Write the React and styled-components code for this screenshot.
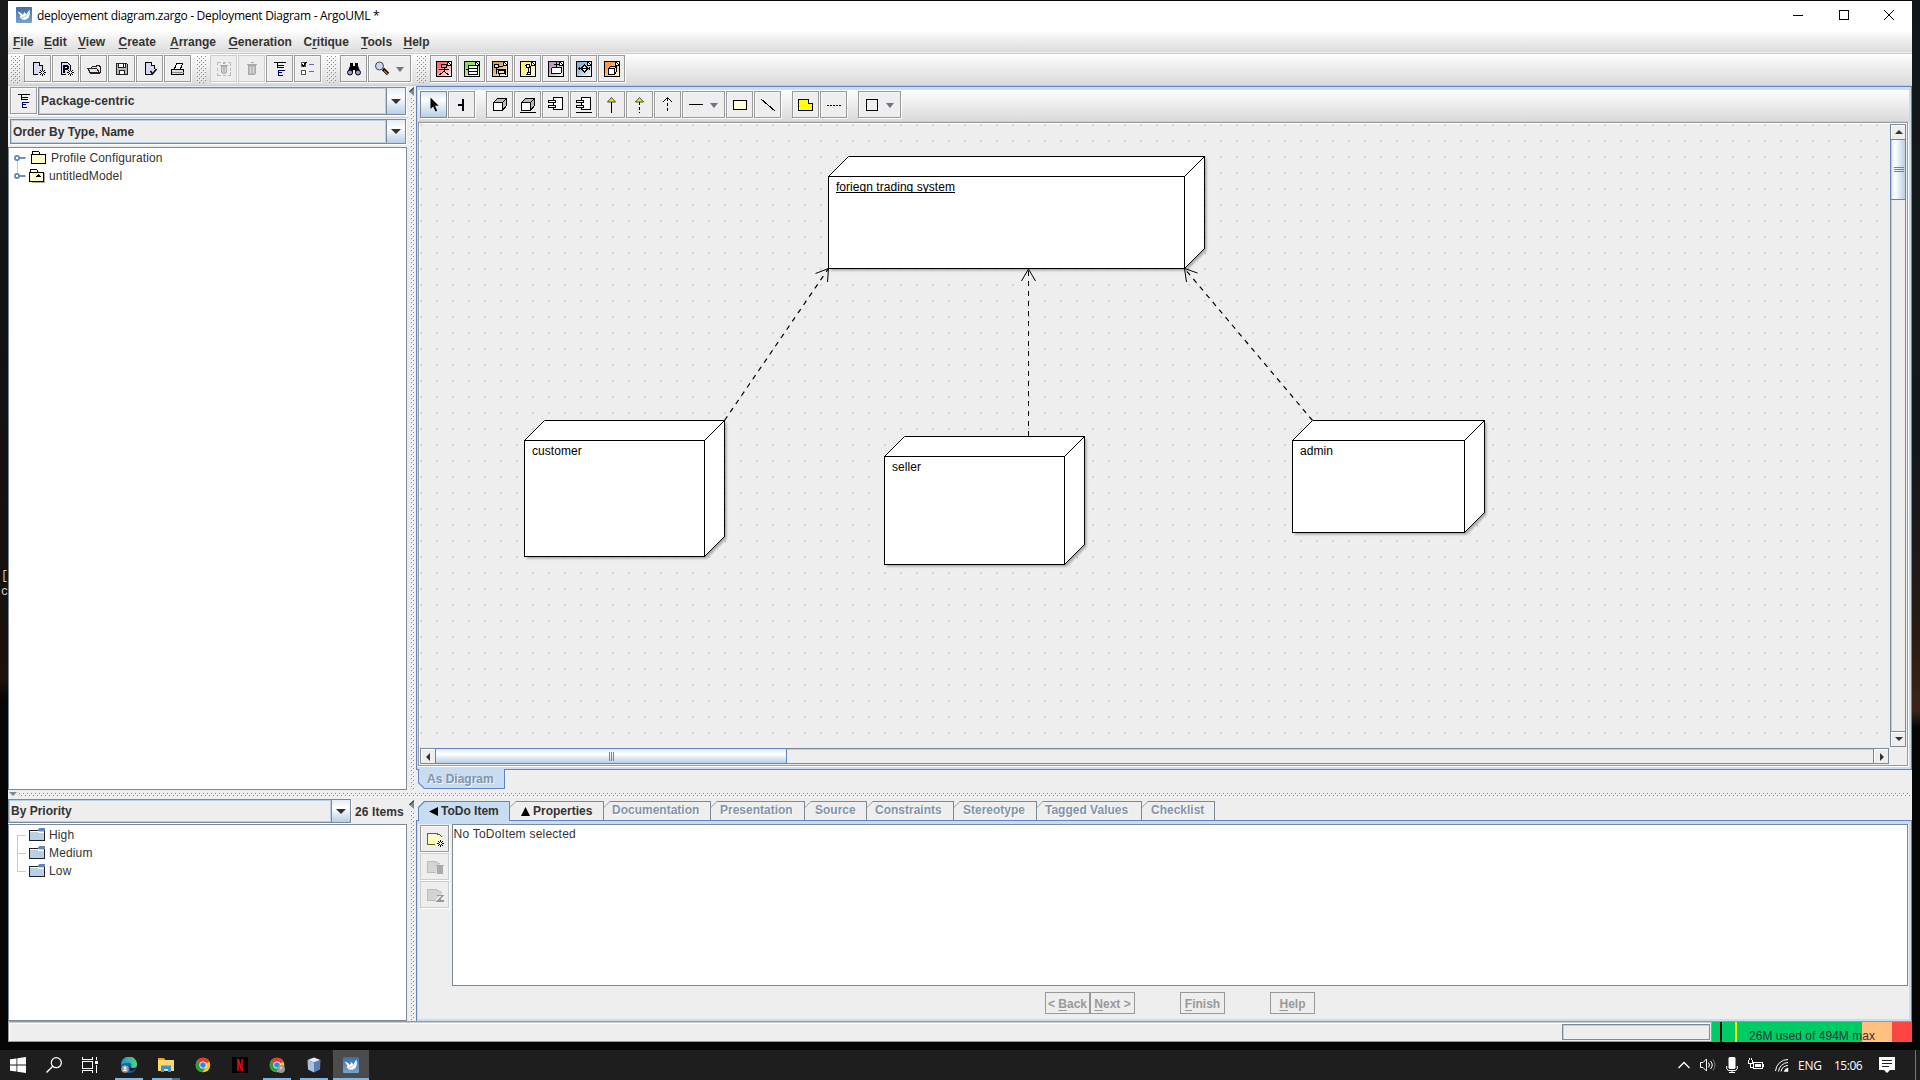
import React from 'react';
import styled, { createGlobalStyle, css } from 'styled-components';

const Global = createGlobalStyle`
  html, body { margin: 0; padding: 0; background: #050505; }
  * { box-sizing: border-box; }
  svg { display: block; flex: none; }
`;

const metal = '#7a8a99';
const blue = '#6382bf';
const sky = '#c8ddf2';
const face = '#eeeeee';

const dots = (c, x = 0, y = 0) => css`
  background-image: conic-gradient(at 1px 1px, transparent 75%, ${c} 0), conic-gradient(at 1px 1px, transparent 75%, ${c} 0),
    conic-gradient(at 1px 1px, transparent 75%, #fff 0), conic-gradient(at 1px 1px, transparent 75%, #fff 0);
  background-size: 4px 4px;
  background-position: ${x}px ${y}px, ${x + 2}px ${y + 2}px, ${x + 1}px ${y + 1}px, ${x + 3}px ${y + 3}px;
`;

/* ---------- desktop and window ---------- */
const Desktop = styled.div`
  width: 1920px;
  height: 1080px;
  overflow: hidden;
  display: grid;
  grid-template: 1050px 30px / 1fr;
  background: #050505;
  font-family: 'Liberation Sans', Arial, sans-serif;
  font-size: 12px;
  color: #333;
`;
const Stage = styled.div`
  display: grid;
  grid-template-columns: 8px 1904px 8px;
  min-height: 0;
`;
const LeftEdge = styled.div`
  padding: 568px 0 0 1px;
  overflow: hidden;
  background: linear-gradient(#18191a 0, #101415 300px, #16110e 560px, #1d110b 680px, #050505 700px);
  color: #ccc;
  font: 12px/16px 'Liberation Mono', monospace;
`;
const RightEdge = styled.div`
  background: linear-gradient(#101719 0, #141a1c 250px, #12181a 450px, #2b1b14 640px, #3d2417 710px, #060606 728px);
`;
const Window = styled.div`
  margin-top: 1px;
  height: 1041px;
  background: ${face};
  display: flex;
  flex-direction: column;
`;
const TitleBar = styled.div`
  height: 30px;
  flex: none;
  background: #fff;
  display: flex;
  align-items: center;
  padding: 0 0 2px 8px;
  color: #000;
  font: 12px 'Open Sans', 'Noto Sans', sans-serif;
`;
const Title = styled.span`
  margin-left: 5px;
  flex: 1;
  letter-spacing: -0.28px;
  white-space: nowrap;
`;
const CaptionButton = styled.div`
  width: 45.5px;
  display: flex;
  justify-content: center;
`;
const barFill = 'linear-gradient(#fff 0, #f6f6f6 20%, #dadada 100%)';
const MenuBar = styled.div`
  height: 23px;
  flex: none;
  display: flex;
  padding: 0 0 0 5px;
  background: ${barFill};
  border-bottom: 1px solid #ccc;
  box-shadow: inset 0 -1px 0 #eee;
`;
const MenuItem = styled.div`
  width: ${(p) => p.$w}px;
  font-weight: bold;
  line-height: 23px;
  text-underline-offset: 2px;
  white-space: nowrap;
`;
const ToolBar = styled.div`
  height: 32px;
  flex: none;
  display: flex;
  padding: 1px 0 0 2px;
  background: ${barFill};
  border-bottom: 1px solid #ccc;
`;
const Grip = styled.div`
  width: 10px;
  height: 28px;
  margin: 0 4px 0 ${(p) => p.$ml || 0}px;
  ${dots(metal, 1, 1)}
`;
const ToolButton = styled.div`
  width: ${(p) => p.$w || 27}px;
  height: 27px;
  flex: none;
  margin-right: 1px;
  margin-left: ${(p) => p.$ml || 0}px;
  padding: 5px 0 0 5px;
  display: flex;
  gap: 6px;
  background: ${(p) => (p.$on ? 'linear-gradient(#dbe7f3, #fff 30%, #b8cfe5)' : face)};
  border: 1px solid ${(p) => (p.$off ? '#ccc' : p.$on ? metal : '#999')};
  box-shadow: 1px 1px 0 #fff${(p) => (p.$off || p.$on ? '' : ', inset 1px 1px 0 #f8f8f8')};
`;

/* ---------- split layout ---------- */
const Row = styled.div`
  height: ${(p) => p.$h}px;
  flex: none;
  display: grid;
  grid-template-columns: 400px 8px 1496px;
`;
const LeftPane = styled.div`
  display: flex;
  flex-direction: column;
  min-height: 0;
`;
const VDivider = styled.div`
  padding: 1px 0 0 1px;
  display: flex;
  flex-direction: column;
`;
const VDots = styled.div`
  flex: 1;
  width: 4px;
  margin: 2px 0 0 2px;
  ${dots(metal, 0, 0)}
`;
const HDivider = styled.div`
  height: 9px;
  flex: none;
  display: flex;
  padding: 2px 2px 0 1px;
`;
const HDots = styled.div`
  flex: 1;
  height: 4px;
  margin: 1px 0 0 2px;
  ${dots(metal, 0, 0)}
`;

const ComboRow = styled.div`
  display: flex;
  flex: none;
  height: ${(p) => p.$h}px;
  padding: ${(p) => p.$pad};
  border-bottom: ${(p) => (p.$line ? '1px solid #ccc' : '0')};
`;
const ComboBox = styled.div`
  flex: 1;
  height: ${(p) => p.$h}px;
  display: flex;
  border: 1px solid ${metal};
  box-shadow: 1px 1px 0 #fff;
`;
const ComboText = styled.div`
  flex: 1;
  padding-left: 1px;
  display: flex;
  align-items: center;
  border: 1px solid #b8cfe5;
  font-weight: bold;
  letter-spacing: ${(p) => p.$ls || 0}px;
`;
const ComboArrow = styled.div`
  width: 19px;
  border-left: 1px solid ${metal};
  background: linear-gradient(#e4edf6, #fff 35%, #b8cfe5);
  display: flex;
  align-items: center;
  justify-content: center;
`;
const Tree = styled.div`
  flex: 1;
  width: 399px;
  background: #fff;
  border: 1px solid ${metal};
  padding-top: 1px;
`;
const TreeRow = styled.div`
  height: 18px;
  display: flex;
  align-items: center;
  letter-spacing: ${(p) => p.$ls || 0}px;
`;
const Count = styled.div`
  width: 57px;
  padding-left: 4px;
  font-weight: bold;
  line-height: 26px;
  letter-spacing: 0.1px;
  white-space: nowrap;
`;

/* ---------- diagram pane ---------- */
const RightPane = styled.div`
  display: flex;
  flex-direction: column;
  min-width: 0;
`;
const DiagramFrame = styled.div`
  height: 684px;
  flex: none;
  border: 1px solid ${blue};
`;
const DiagramInner = styled.div`
  height: 682px;
  border: solid ${sky};
  border-width: 3px 2px 2px 1px;
  background: #fff;
`;
const ScrollPane = styled.div`
  width: 1490px;
  height: 644px;
  border: 1px solid #999;
  padding: 1px 0 0 1px;
  background: #fff;
`;
const ScrollGrid = styled.div`
  display: grid;
  grid-template: 624px 17px / 1470px 17px;
  background: ${face};
`;
const Canvas = styled.div`
  position: relative;
  background: conic-gradient(at 2px 2px, transparent 75%, #d6d6d6 0) 0 0 / 16px 16px ${face};
`;
const NodeLabel = styled.div`
  position: absolute;
  left: ${(p) => p.$x}px;
  top: ${(p) => p.$y}px;
  line-height: 14px;
  color: #000;
  letter-spacing: 0.04px;
  white-space: nowrap;
  ${(p) =>
    p.$underlined &&
    css`
      height: 13px;
      overflow: hidden;
      border-bottom: 1px solid #000;
    `}
`;
const VScroll = styled.div`
  width: 16px;
  height: 623px;
  display: flex;
  flex-direction: column;
  border: 1px solid ${metal};
  box-shadow: inset 1px 0 0 #b8cfe5;
`;
const HScroll = styled.div`
  width: 1469px;
  height: 16px;
  display: flex;
  border: 1px solid ${metal};
  box-shadow: inset 0 1px 0 #b8cfe5;
`;
const ScrollBtn = styled.div`
  width: 14px;
  height: 14px;
  flex: none;
  display: flex;
  align-items: center;
  justify-content: center;
  background: ${face};
  box-shadow: inset 1px 1px 0 #fff;
  padding: ${(p) => (p.$end === 'left' ? '2px 0 0 0' : p.$end === 'right' ? '2px 0 0 1px' : '0 0 0 2px')};
  ${(p) => p.$end === 'bottom' && css`height: 15px; border-top: 1px solid ${metal};`}
  ${(p) => p.$end === 'right' && css`width: 15px; border-left: 1px solid ${metal};`}
`;
const Track = styled.div`
  flex: 1;
`;
const VThumb = styled.div`
  height: 61px;
  width: 16px;
  margin-left: -1px;
  border: 1px solid ${blue};
  box-shadow: inset 1px 0 0 #b8cfe5;
  background: linear-gradient(90deg, #dbe7f3, #fff 30%, #b8cfe5);
  display: flex;
  align-items: center;
  justify-content: center;
  padding-left: 2px;
`;
const HThumb = styled.div`
  width: 352px;
  height: 16px;
  margin-top: -1px;
  border: 1px solid ${blue};
  background: linear-gradient(#dbe7f3, #fff 35%, #b8cfe5);
  display: flex;
  align-items: center;
  justify-content: center;
`;
const BottomTab = styled.div`
  width: 87px;
  height: 20px;
  margin: -1px 0 0 2px;
  flex: none;
  background: ${blue};
  clip-path: polygon(0 0, 100% 0, 100% 100%, 6px 100%, 0 14px);
  padding: 0 1px 1px;
`;
const BottomTabFace = styled.div`
  height: 19px;
  background: ${sky};
  clip-path: polygon(0 0, 100% 0, 100% 100%, 5.6px 100%, 0 13.4px);
  color: #8294a8;
  font-weight: bold;
  line-height: 21px;
  padding-left: 8px;
  text-shadow: 1px 1px 0 #eef4fb;
`;

/* ---------- details pane ---------- */
const TabStrip = styled.div`
  display: flex;
  height: 21px;
  flex: none;
  padding: 2px 0 0 2px;
`;
const TabOuter = styled.div`
  width: ${(p) => p.$w}px;
  height: ${(p) => (p.$on ? 20 : 19)}px;
  flex: none;
  position: relative;
  z-index: ${(p) => (p.$on ? 2 : 1)};
  padding: 1px 1px 0 ${(p) => (p.$on ? 1 : 0)}px;
  background: ${(p) => (p.$on ? blue : metal)};
  clip-path: polygon(0 6px, 6px 0, 100% 0, 100% 100%, 0 100%);
`;
const TabFace = styled.div`
  height: 100%;
  background: ${(p) => (p.$on ? sky : face)};
  clip-path: polygon(0 5.8px, 5.8px 0, 100% 0, 100% 100%, 0 100%);
  display: flex;
  align-items: center;
  gap: 3px;
  padding: 0 0 ${(p) => (p.$off ? 2 : p.$on ? 1 : 0)}px ${(p) => p.$pl}px;
  font-weight: bold;
  white-space: nowrap;
  color: ${(p) => (p.$off ? '#8294a8' : '#333')};
  text-shadow: ${(p) => (p.$off ? '1px 1px 0 #fff' : 'none')};
`;
const DetailFrame = styled.div`
  height: 201px;
  border: solid ${blue};
  border-width: 1px 1px 0;
`;
const DetailInner = styled.div`
  height: 200px;
  border: solid ${sky};
  border-width: 3px 2px 2px 1px;
  background: ${face};
  display: grid;
  grid-template-columns: 34px 1456px;
`;
const DetailTools = styled.div`
  padding: 1px 0 0 2px;
  display: flex;
  flex-direction: column;
  gap: 1px;
`;
const TextPane = styled.div`
  height: 162px;
  background: #fff;
  border: 1px solid ${metal};
  padding: 2px 0 0 0.5px;
  line-height: 14px;
  letter-spacing: 0.23px;
`;
const Wizard = styled.div`
  display: flex;
  padding: 6px 0 0 593px;
`;
const WizardButton = styled.div`
  width: 45px;
  height: 22px;
  margin-right: ${(p) => p.$mr || 0}px;
  border: 1px solid #999;
  color: #999;
  font-weight: bold;
  line-height: 22px;
  text-align: center;
  text-underline-offset: 2px;
  white-space: nowrap;
`;

/* ---------- status bar ---------- */
const StatusBar = styled.div`
  height: 21px;
  display: flex;
  border-top: 1px solid #999;
`;
const StatusField = styled.div`
  width: 1704px;
  height: 20px;
  border: 1px solid #999;
  border-top-color: #ccc;
  box-shadow: inset 1px 1px 0 #fff;
  padding: 1px 0 0 1553px;
`;
const Progress = styled.div`
  width: 148px;
  height: 16px;
  border: 1px solid ${metal};
  box-shadow: inset 1px 1px 0 #b8cfe5;
`;
const Memory = styled.div`
  width: 200px;
  height: 20px;
  padding-left: 37px;
  line-height: 28px;
  letter-spacing: 0.03px;
  overflow: hidden;
  white-space: nowrap;
  background: linear-gradient(90deg, #00cc66 8px, #000 8px 10px, #00cc66 10px 23px, #ff0 23px 25px, #00cc66 25px 150px, #ffc080 150px 180px, #ff4444 180px);
`;

/* ---------- task bar ---------- */
const Taskbar = styled.div`
  background: #1e1e1e;
  display: flex;
  color: #fff;
  font: 12px 'Open Sans', 'Noto Sans', sans-serif;
`;
const TaskItem = styled.div`
  width: ${(p) => p.$w || 37}px;
  margin-left: ${(p) => p.$ml || 0}px;
  height: 30px;
  display: flex;
  flex-direction: column;
  align-items: center;
  justify-content: space-between;
  padding: 7px ${(p) => (p.$w ? 0 : 1)}px 0 0;
  background: ${(p) => (p.$active ? '#4c4c4c' : 'none')};
`;
const Running = styled.div`
  width: ${(p) => (p.$full ? 36 : 28)}px;
  height: 2px;
  background: ${(p) => (p.$split ? 'linear-gradient(90deg, #76b9ed 20px, #4b7594 20px)' : '#76b9ed')};
`;
const Tray = styled.div`
  margin-left: auto;
  display: flex;
  align-items: center;
  height: 30px;
  border-right: 1px solid #777;
  padding-right: 20px;
  margin-right: 4px;
`;
const TrayItem = styled.div`
  width: ${(p) => p.$w}px;
  flex: none;
  letter-spacing: ${(p) => p.$ls || 0}px;
  white-space: nowrap;
`;

/* ---------- icons ---------- */
const Icon = ({ children, w = 16, h = 16, smooth, ...rest }) => (
  <svg width={w} height={h} viewBox={`0 0 ${w} ${h}`} fill="none" stroke="#000" shapeRendering={smooth ? 'auto' : 'crispEdges'} {...rest}>
    {children}
  </svg>
);
const Burst = ({ x = 12, y = 11 }) => (
  <g transform={`translate(${x} ${y})`} stroke="none" fill="#000">
    <path d="M0 -3h1v2h-1zM0 2h1v2h-1zM-3 0h2v1h-2zM2 0h2v1h-2z" />
    <path d="M-2 -2h1v1h-1zM2 -2h1v1h-1zM-2 2h1v1h-1zM2 2h1v1h-1z" />
    <path d="M-1 -1h1v1h-1zM1 -1h1v1h-1zM-1 1h1v1h-1zM1 1h1v1h-1z" />
  </g>
);
const NewIcon = () => <Icon><path d="M8 13.500h-4.500v-12h6l3 3v3" fill="#d8d8f8" /><path d="M9.500 1.500v3h3" fill="#fff" /><Burst /></Icon>;
const NewProjectIcon = () => (
  <Icon>
    <path d="M8 13.500h-4.500v-12h6l3 3v3" fill="#d8d8f8" />
    <path d="M5 4h5v1h1v3h-1v1h-3v3h-2z" fill="#000" stroke="none" />
    <path d="M7 6h2v1h-2z" fill="#fff" stroke="none" />
    <Burst />
  </Icon>
);
const OpenIcon = () => (
  <Icon><path d="M3.500 11.500v-3l3 -3h3l2 -1h2l1 2v5l-1 1h-9z" fill="#f6dcd2" stroke="#222" /><path d="M1.500 7.500h9l3 4h-9z" fill="#f6e2da" stroke="#222" /></Icon>
);
const SaveIcon = () => (
  <Icon><path d="M2.500 2.500h10l1 1v10h-11z" fill="#b8b8b8" stroke="#222" /><path d="M4.500 2.500h7v4h-7zM5.500 9.500h5v4h-5z" fill="#fff" stroke="#222" /><path d="M9.500 3v3" /></Icon>
);
const SaveAsIcon = () => (
  <Icon><path d="M9.500 13.500h-6v-12h6l3 3v3" fill="#d8d8f8" /><path d="M9.500 1.500v3h3" fill="#fff" /><path d="M8.500 10l2 3l4 -5" strokeWidth="1.600" shapeRendering="auto" /></Icon>
);
const PrintIcon = () => (
  <Icon><path d="M4.500 8l2 -5.500h6l-2 5.500" fill="#fff" /><path d="M1.500 8.500h12v5h-12z" fill="#ddd" /><path d="M2 11.500h12" stroke="#888" /><path d="M8 12.500h4" stroke="#e6e600" /></Icon>
);
const trash = (
  <g stroke="#aaa" fill="#bbb"><path d="M4.500 4.500h7l-.5 9h-6z" /><path d="M3 3.500h10M6.500 1.500h3" strokeWidth="1.500" /><path d="M6.500 6v6M9.500 6v6" stroke="#ddd" /></g>
);
const RemoveIcon = () => <Icon><path d="M1.500 4v-2.500h3M11.500 1.500h3v3M14.500 11v3.500h-3M4.500 14.500h-3v-3M6.500 1.500h3M1.500 6.500v3M14.500 6.500v3M6.500 14.500h3" stroke="#bbb" /><g transform="translate(1.600 1.600) scale(.8)">{trash}</g></Icon>;
const TrashIcon = () => <Icon>{trash}</Icon>;
const PerspectiveIcon = () => (
  <Icon>
    <path d="M2 1.500h12M5 4.500h7M5 6.500h7M5.500 2v5" />
    <path d="M6.500 9v6M6 9.500h7M6 11.500h4M6 14.500h5" stroke="#000080" />
  </Icon>
);
const SettingsIcon = () => (
  <Icon>
    <path d="M1.500 1.500h4v4h-4zM1.500 9.500h4v4h-4z" fill="#fff" stroke="#555" />
    <path d="M2 3l1.500 2l3 -4" strokeWidth="1.400" />
    <path d="M9 3.500h5M9 10.500h5" stroke="#6666aa" strokeWidth="1" />
  </Icon>
);
const FindIcon = () => (
  <Icon smooth="1">
    <path d="M4 2h3v3h2V2h3v3l2 5v2H9V9H7v3H2v-2l2-5z" fill="#000" stroke="none" />
    <circle cx="4" cy="11.500" r="2.500" fill="#9aa0d0" /><circle cx="12" cy="11.500" r="2.500" fill="#9aa0d0" />
  </Icon>
);
const ZoomIcon = () => (
  <Icon smooth="1"><path d="M9 8l5 5" stroke="#000" strokeWidth="3.200" /><path d="M10 9.500l3.500 3.500" stroke="#b07830" strokeWidth="1.500" /><circle cx="5.500" cy="5" r="4" fill="#cfd4ee" stroke="#445" /></Icon>
);
const Caret = ({ c = metal, w = 8, h = 4, ...rest }) => (
  <svg width={w} height={h} viewBox="0 0 8 4" preserveAspectRatio="none" {...rest}><path d="M0 0h8l-4 4z" fill={c} /></svg>
);
const MenuCaret = styled(Caret).attrs({ c: '#66788a', h: 5 })`
  margin-top: 6px;
`;

const diagramArt = {
  usecase: ['#ff6b6b', <><path d="M5.500 3.500h5v3h-5zM8 7v3M3 8.500h10M8 10l-4.500 4M8 10l4.500 4" /></>],
  klass: ['#8ee05a', <><path d="M4.500 4.500h9v9h-9z" fill="#fff" /><path d="M5 7.500h9M5 10.500h9M2 8.500h2" /></>],
  sequence: ['#d8a050', <><path d="M2.500 3.500h4v3h-4zM6.500 9.500h6v3h-6z" fill="#f5deb0" /><path d="M4.500 7v6M4 8.500h9M13.500 8v6M7 5.500h4M7 12.500v2" /></>],
  collab: ['#fff06a', <><path d="M6.500 3.500h3v3h-3zM7.500 11.500h3v2h-3z" fill="#fff" /><path d="M10.500 5v7M5 4.500h2M6 13.500h2M8.500 7v4" /></>],
  state: ['#b89ac0', <><path d="M8.500 1v6M6 3.500h5" /><rect x="3.500" y="6.500" width="10" height="6" rx="1.500" fill="#fff" /></>],
  activity: ['#86b4e0', <><path d="M2 7.500h12M8.500 4l3.500 3.500l-3.500 3.500l-3.500-3.500z" fill="#fff" /><path d="M3.500 6v3M13.500 6v3" /></>],
  deployment: ['#ff9838', <><path d="M4.500 7.500l2-2h6v5l-2 3" fill="#ffd9b0" /><path d="M4.500 7.500h6v6h-6z" fill="#fff" /><path d="M10.500 7.500l2-2" /></>],
};
const DiagramIcon = ({ kind }) => (
  <Icon>
    <defs>
      <linearGradient id={`g-${kind}`} x1="0" y1="0" x2="1" y2="1">
        <stop offset=".25" stopColor={diagramArt[kind][0]} /><stop offset="1" stopColor="#fff" />
      </linearGradient>
    </defs>
    <path d="M.5 .5h11l4 4v11h-15z" fill={`url(#g-${kind})`} />
    <path d="M11.500 .5h4v4h-4z" fill="#fff" stroke="none" />
    <path d="M11.500 .5v4h4M11.500 .5l4 4M.5 .5h15v15h-15z" />
    {diagramArt[kind][1]}
  </Icon>
);
const cube = (
  <><path d="M1.500 5.500l4-4h9v7l-4 5z" fill="#bbb" stroke="#000" /><path d="M1.500 5.500h9v8h-9z" fill="#fff" /><path d="M10.500 5.500l4-4" /></>
);
const component = (
  <><path d="M5.500 .5h9v12h-9z" fill="#fff" /><path d="M.5 3.500h7v2h-7zM.5 8.500h7v2h-7z" fill="#fff" /></>
);
const CursorIcon = () => <Icon smooth="1"><path d="M4.500 .5v11.500l2.700-2.500l2.300 5l1.700-.8l-2.200-4.900h3.700z" fill="#000" stroke="none" /></Icon>;
const BroomIcon = () => <Icon><path d="M4 7h5v2h-5zM8 2h2v12h-2z" fill="#000" stroke="none" /></Icon>;
const NodeIcon = () => <Icon>{cube}</Icon>;
const NodeInstIcon = () => <Icon>{cube}<path d="M0 15.500h16" /></Icon>;
const CompIcon = () => <Icon>{component}</Icon>;
const CompInstIcon = () => <Icon>{component}<path d="M0 15.500h16" /></Icon>;
const GenIcon = ({ dash }) => (
  <Icon><path d="M7.500 5v11" strokeDasharray={dash ? '3 2' : undefined} /><path d="M7.500 .5l4 4.500h-8z" fill="#ee0" stroke="#222" shapeRendering="auto" strokeWidth=".8" /></Icon>
);
const DepIcon = () => <Icon><path d="M7.500 1v15" strokeDasharray="3 2" /><path d="M7.500 .5l-4.500 4.500M7.500 .5l4.500 4.500" shapeRendering="auto" /></Icon>;
const AssocIcon = () => <Icon><path d="M1 7.500h14" /></Icon>;
const RectIcon = () => <Icon><path d="M1.500 3.500h13v9h-13z" fill="#ffffdc" /></Icon>;
const LineIcon = () => <Icon><path d="M1 2l14 12" /></Icon>;
const NoteIcon = () => <Icon><path d="M.5 2.500h10l4 4v7h-14z" fill="#ff0" /><path d="M10.500 2.500v4h4" fill="#fff" /></Icon>;
const DashIcon = () => <Icon><path d="M1 8.500h14" strokeDasharray="2 1" /></Icon>;
const SquareIcon = () => <Icon><path d="M2.500 2.500h11v11h-11z" /></Icon>;

const NewTodoIcon = () => (
  <Icon w={20} h={18} viewBox="1 1 20 18"><path d="M2.500 4.500h9l4 3v6h-13z" fill="#ffffc4" stroke="none" /><path d="M10 14.500h-7.500v-11h8l4 1l3 3" stroke="#660" strokeWidth="1.300" /><Burst x={15} y={13} /></Icon>
);
const ResolveIcon = () => (
  <Icon w={20} h={18} viewBox="1 2 20 18"><path d="M10.500 15.500h-8v-11h8l5 3" fill="#d4d4d4" stroke="#bbb" /><path d="M12.500 9.500h5v7h-5zM11 8.500h8" fill="#aaa" stroke="#aaa" /></Icon>
);
const SnoozeIcon = () => (
  <Icon w={20} h={18} viewBox="1 2 20 18"><path d="M10.500 15.500h-8v-11h8l7 3" fill="#d4d4d4" stroke="#bbb" /><path d="M12 10.500h6l-5 5.500h6" stroke="#999" strokeWidth="1.800" /></Icon>
);

const ExpandNode = ({ up, down }) => (
  <svg width="17" height="18" viewBox="0 0 17 18">
    {up && <path d="M8.500 0v7" stroke="#b8cfe5" />}
    {down && <path d="M8.500 11v7" stroke="#b8cfe5" />}
    <path d="M10 9h6.500" stroke={blue} strokeWidth="1.800" />
    <circle cx="8" cy="9" r="2.100" fill="#fff" stroke={blue} strokeWidth="1.700" />
  </svg>
);
const FolderSvg = styled.svg`
  margin: 0 4px 0 ${(p) => p.$ml}px;
`;
const YellowFolder = ({ model, ml }) => (
  <FolderSvg $ml={ml} width={16} height={14} viewBox="0 0 16 14" shapeRendering="crispEdges">
    {model && <path d="M3 13.500h13M15.500 4v10" stroke="#aaa" />}
    <path d="M.5 3.500v9h14v-9zM1.500 3.500v-3h6l1 1v2" fill="#ffffcc" stroke="#000" />
    {model && <path d="M7 8h5l-2.500-3z" fill="#000" />}
  </FolderSvg>
);
const Branch = ({ last }) => (
  <svg width="20" height="18" viewBox="0 0 20 18" shapeRendering="crispEdges">
    <path d={last ? 'M8.500 0v9.500h8.500' : 'M8.500 0v18M8.500 9.500h8.500'} fill="none" stroke="#b8cfe5" />
  </svg>
);
const FirstBranch = () => (
  <svg width="20" height="18" viewBox="0 0 20 18" shapeRendering="crispEdges"><path d="M17 9.500H8.500V18" fill="none" stroke="#b8cfe5" /></svg>
);
const BlueFolder = () => (
  <svg width="20" height="14" viewBox="0 0 20 14" shapeRendering="crispEdges">
    <path d="M.5 2.500h8l1-1h6v11h-15z" fill="#b8cfe5" stroke="#222" />
    <path d="M1 3.500h8l1 1h5" stroke="#fff" fill="none" /><path d="M10 0h6v3h-7z" fill={blue} />
  </svg>
);
const Bird = () => (
  <svg width="16" height="16" viewBox="0 0 16 16">
    <defs><linearGradient id="bird" x1="0" y1="0" x2="0" y2="1"><stop offset="0" stopColor="#3f6ca8" /><stop offset="1" stopColor="#7aa2cf" /></linearGradient></defs>
    <rect width="16" height="16" rx="1" fill="url(#bird)" />
    <path d="M1.500 4.500l3.500 1.500L6.800 8l1.700-3l1.700 2.500L13.500 2.500l.5 4.500l-1.500 4l-3 1.800L6 12.500L3.500 10l1-1.200z" fill="#fff" />
    <path d="M5 11l4-1.500l4-3" stroke="#b9cde4" fill="none" />
  </svg>
);
const Tri = ({ left }) => <svg width="9" height="9" viewBox="0 0 9 9"><path d={left ? 'M9 0v9L0 4.500z' : 'M4.500 0l4.500 9H0z'} fill="#000" /></svg>;
const CollapseLeft = () => <svg width="5" height="9" viewBox="0 0 5 9"><path d="M5 0v9L0 4.500z" fill={metal} /><path d="M5 0v1L1 5L0 4.500z" fill="#333" /></svg>;
const Arrow = ({ d, w, h }) => <svg width={w} height={h} viewBox={`0 0 ${w} ${h}`}><path d={d} fill="#333" /></svg>;

const Chrome = ({ badge }) => (
  <svg width="16" height="16" viewBox="0 0 16 16">
    <circle cx="8" cy="8" r="7.300" fill="#fbc716" />
    <path d="M8 8L1.700 4.300A7.300 7.300 0 0 1 14.400 4.500z" fill="#e33b2e" />
    <path d="M8 8L1.700 4.300A7.300 7.300 0 0 0 7.300 15.300L11 10z" fill="#2a9c48" />
    <circle cx="8" cy="8" r="3.600" fill="#fff" /><circle cx="8" cy="8" r="2.800" fill="#3f7fea" />
    {badge && <><circle cx="12" cy="12" r="4" fill="#999" /><circle cx="12" cy="11" r="1.500" fill="#ccc" /></>}
  </svg>
);
const Edge = () => (
  <svg width="16" height="16" viewBox="0 0 16 16">
    <defs><linearGradient id="edge" x1="0" y1="0" x2="1" y2="0"><stop offset="0" stopColor="#1a94dd" /><stop offset="1" stopColor="#55d66b" /></linearGradient></defs>
    <circle cx="8" cy="8" r="8" fill="#0c62b8" />
    <path d="M0 8a8 8 0 0 1 16-1c.2 2.500-1.500 4-4 4c-1.500 0-2.500-.5-2-1.200c1.200-1.600 0-4-2.600-4C4 5.800 1 7 0 8z" fill="url(#edge)" />
    <path d="M9.800 10.200c.7 1 3.700 1.200 5.200.2c-1 2-3 3.500-5 3.600c-2-1-1.800-3-.2-3.800z" fill="#1e1e1e" />
    <circle cx="4" cy="12" r="3.800" fill="#999" /><circle cx="4" cy="11" r="1.400" fill="#eee" /><path d="M1.800 14a2.300 2 0 0 1 4.400 0z" fill="#eee" />
  </svg>
);
const FileExplorer = () => (
  <svg width="16" height="16" viewBox="0 0 16 16">
    <path d="M0 1h6l1.500 2H0z" fill="#e8a21c" /><path d="M0 3h16v11H0z" fill="#ffd867" />
    <path d="M3 15V8.500h10V15h-3v-3H6v3z" fill="#3a94dc" />
  </svg>
);
const Netflix = () => (
  <svg width="16" height="16" viewBox="0 0 16 16"><rect width="16" height="16" fill="#000" /><path d="M5 2h2v12H5zM9 2h2v12H9z" fill="#b00710" /><path d="M5 2h2l4 12H9z" fill="#e50914" /></svg>
);
const GlassCube = () => (
  <svg width="16" height="16" viewBox="0 0 16 16"><path d="M8 .5l6.500 2.500L8 5.500L1.500 3z" fill="#e3edf8" /><path d="M1.500 3L8 5.500v10L2 12.500z" fill="#a9c0de" /><path d="M14.500 3L8 5.500v10l6-3z" fill="#5c7fb2" /></svg>
);
const WindowsLogo = () => (
  <svg width="16" height="16" viewBox="0 0 16 16"><path d="M0 2.300L6.500 1.400v6.200H0zM7.300 1.300L16 0v7.600H7.300zM0 8.400h6.500v6.200L0 13.700zM7.300 8.400H16V16l-8.700-1.300z" fill="#fff" /></svg>
);
const SearchIcon = () => <Icon smooth="1" stroke="#fff"><circle cx="10.300" cy="5.700" r="5" strokeWidth="1.300" /><path d="M6.800 9.300L.5 15.500" strokeWidth="1.400" /></Icon>;
const TaskView = () => (
  <Icon stroke="#fff"><path d="M.5 0v2.500h10V0M.5 16v-2.500h10V16M.5 4.500h10v7h-10z" /><path d="M14.500 0v3M14.500 8v8" /><path d="M13 4h3v3h-3z" fill="#fff" stroke="none" /></Icon>
);

/* ---------- deployment diagram ---------- */
const nodes = [
  { name: 'foriegn trading system', x: 828.5, y: 176.5, w: 356, h: 92, underlined: true },
  { name: 'customer', x: 524.5, y: 440.5, w: 180, h: 116 },
  { name: 'seller', x: 884.5, y: 456.5, w: 180, h: 108 },
  { name: 'admin', x: 1292.5, y: 440.5, w: 172, h: 92 },
];
const NodeShape = ({ x, y, w, h }) => (
  <g>
    <g transform="translate(2 2)" fill="#000" opacity=".3" stroke="none">
      <path d={`M${x} ${y}l20-20h${w}v${h}l-20 20h-${w}z`} filter="url(#soft)" />
    </g>
    <path d={`M${x} ${y}l20-20h${w}v${h}l-20 20h-${w}z`} fill="#fff" stroke="none" />
    <g fill="none" stroke="#000">
      <path d={`M${x} ${y}h${w}v${h}h-${w}zM${x + 20} ${y - 20}h${w}v${h}`} shapeRendering="crispEdges" />
      <path d={`M${x} ${y}l20-20M${x + w} ${y}l20-20M${x + w} ${y + h}l20-20`} />
    </g>
  </g>
);
const Diagram = () => (
  <svg width="1470" height="624" viewBox="420 124 1470 624">
    <defs><filter id="soft"><feGaussianBlur stdDeviation="1" /></filter></defs>
    {nodes.map((n) => <NodeShape key={n.name} {...n} />)}
    <g fill="none" stroke="#000">
      <path d="M724.500 420.500L828.500 268.500M1312.500 420.500L1184.500 268.500" strokeDasharray="5 5" strokeWidth="1.200" />
      <path d="M1028.500 436V268" strokeDasharray="5 5" shapeRendering="crispEdges" />
      <path d="M1021.500 281L1028.500 269L1035.500 281M815.500 273.500L828.500 268.500L827.500 282M1197.500 273L1184.500 268.500L1186.500 282" />
    </g>
  </svg>
);

const menus = [['F', 'ile', 31], ['E', 'dit', 34], ['V', 'iew', 40.5], ['C', 'reate', 51.5], ['A', 'rrange', 58.5], ['G', 'eneration', 75], ['', 'Critique', 57.5], ['T', 'ools', 42.5], ['H', 'elp', 40]];
const tabs = [
  ['Documentation', 107, 8], ['Presentation', 94, 9], ['Source', 62, 10], ['Constraints', 87, 8],
  ['Stereotype', 83, 9], ['Tagged Values', 105, 8], ['Checklist', 73, 9],
];

export default function App() {
  return (
    <>
      <Global />
      <Desktop>
        <Stage>
          <LeftEdge>[<br />c</LeftEdge>
          <Window>
            <TitleBar>
              <Bird />
              <Title>deployement diagram.zargo - Deployment Diagram - ArgoUML *</Title>
              <CaptionButton><Icon w={10} h={10}><path d="M0 5.500h10" /></Icon></CaptionButton>
              <CaptionButton><Icon w={10} h={10}><path d="M.5 .5h9v9h-9z" /></Icon></CaptionButton>
              <CaptionButton><Icon w={10} h={10} smooth="1"><path d="M0 0l10 10M10 0L0 10" /></Icon></CaptionButton>
            </TitleBar>
            <MenuBar>
              {menus.map(([u, rest, w]) => (
                <MenuItem key={rest} $w={w}>{u ? <><u>{u}</u>{rest}</> : <>C<u>r</u>itique</>}</MenuItem>
              ))}
            </MenuBar>
            <ToolBar>
              <Grip />
              <ToolButton><NewIcon /></ToolButton>
              <ToolButton><NewProjectIcon /></ToolButton>
              <ToolButton><OpenIcon /></ToolButton>
              <ToolButton><SaveIcon /></ToolButton>
              <ToolButton><SaveAsIcon /></ToolButton>
              <ToolButton><PrintIcon /></ToolButton>
              <Grip $ml={4} />
              <ToolButton $off><RemoveIcon /></ToolButton>
              <ToolButton $off><TrashIcon /></ToolButton>
              <ToolButton><PerspectiveIcon /></ToolButton>
              <ToolButton><SettingsIcon /></ToolButton>
              <Grip $ml={4} />
              <ToolButton><FindIcon /></ToolButton>
              <ToolButton $w={43}><ZoomIcon /><MenuCaret /></ToolButton>
              <Grip $ml={4} />
              {Object.keys(diagramArt).map((k) => <ToolButton key={k}><DiagramIcon kind={k} /></ToolButton>)}
            </ToolBar>

            <Row $h={704}>
              <LeftPane>
                <ComboRow $h={32} $pad="1px 2px 0" $line>
                  <ToolButton><PerspectiveIcon /></ToolButton>
                  <ComboBox $h={28}><ComboText $ls={0.1}>Package-centric</ComboText><ComboArrow><Caret c="#333" w={10} h={5} /></ComboArrow></ComboBox>
                </ComboRow>
                <ComboRow $h={29} $pad="1px 2px 0">
                  <ComboBox $h={25}><ComboText>Order By Type, Name</ComboText><ComboArrow><Caret c="#333" w={10} h={5} /></ComboArrow></ComboBox>
                </ComboRow>
                <Tree>
                  <TreeRow $ls={0.14}><ExpandNode down /><YellowFolder ml={5} />Profile Configuration</TreeRow>
                  <TreeRow $ls={0.14}><ExpandNode up /><YellowFolder model ml={3} />untitledModel</TreeRow>
                </Tree>
              </LeftPane>
              <VDivider><CollapseLeft /><VDots /></VDivider>
              <RightPane>
                <DiagramFrame>
                  <DiagramInner>
                    <ToolBar>
                      <ToolButton $on><CursorIcon /></ToolButton>
                      <ToolButton><BroomIcon /></ToolButton>
                      <ToolButton $ml={10}><NodeIcon /></ToolButton>
                      <ToolButton><NodeInstIcon /></ToolButton>
                      <ToolButton><CompIcon /></ToolButton>
                      <ToolButton><CompInstIcon /></ToolButton>
                      <ToolButton><GenIcon /></ToolButton>
                      <ToolButton><GenIcon dash /></ToolButton>
                      <ToolButton><DepIcon /></ToolButton>
                      <ToolButton $w={43}><AssocIcon /><MenuCaret /></ToolButton>
                      <ToolButton><RectIcon /></ToolButton>
                      <ToolButton><LineIcon /></ToolButton>
                      <ToolButton $ml={10}><NoteIcon /></ToolButton>
                      <ToolButton><DashIcon /></ToolButton>
                      <ToolButton $ml={10} $w={43}><SquareIcon /><MenuCaret /></ToolButton>
                    </ToolBar>
                    <ScrollPane>
                      <ScrollGrid>
                        <Canvas>
                          <Diagram />
                          {nodes.map((n) => (
                            <NodeLabel key={n.name} $x={n.x + 7.5 - 420} $y={n.y + 3.5 - 124} $underlined={n.underlined}>{n.name}</NodeLabel>
                          ))}
                        </Canvas>
                        <VScroll>
                          <ScrollBtn $end="top"><Arrow w={8} h={4} d="M4 0l4 4H0z" /></ScrollBtn>
                          <VThumb><Icon w={10} h={5} stroke={blue}><path d="M0 .5h10M0 2.500h10M0 4.500h10" /></Icon></VThumb>
                          <Track />
                          <ScrollBtn $end="bottom"><Arrow w={8} h={4} d="M4 4l4-4H0z" /></ScrollBtn>
                        </VScroll>
                        <HScroll>
                          <ScrollBtn $end="left"><Arrow w={4} h={8} d="M0 4l4-4v8z" /></ScrollBtn>
                          <HThumb><Icon w={5} h={9} stroke={blue}><path d="M.5 0v9M2.500 0v9M4.500 0v9" /></Icon></HThumb>
                          <Track />
                          <ScrollBtn $end="right"><Arrow w={4} h={8} d="M4 4l-4-4v8z" /></ScrollBtn>
                        </HScroll>
                      </ScrollGrid>
                    </ScrollPane>
                  </DiagramInner>
                </DiagramFrame>
                <BottomTab><BottomTabFace>As Diagram</BottomTabFace></BottomTab>
              </RightPane>
            </Row>

            <HDivider><Caret w={8} h={4} /><HDots /></HDivider>

            <Row $h={222}>
              <LeftPane>
                <ComboRow $h={25} $pad="0">
                  <ComboBox $h={24}><ComboText>By Priority</ComboText><ComboArrow><Caret c="#333" w={10} h={5} /></ComboArrow></ComboBox>
                  <Count>26 Items</Count>
                </ComboRow>
                <Tree>
                  <TreeRow $ls={0.14}><FirstBranch /><BlueFolder />High</TreeRow>
                  <TreeRow $ls={0.14}><Branch /><BlueFolder />Medium</TreeRow>
                  <TreeRow $ls={0.14}><Branch last /><BlueFolder />Low</TreeRow>
                </Tree>
              </LeftPane>
              <VDivider><CollapseLeft /><VDots /></VDivider>
              <RightPane>
                <TabStrip>
                  <TabOuter $w={92} $on><TabFace $on $pl={10}><Tri left />ToDo Item</TabFace></TabOuter>
                  <TabOuter $w={94}><TabFace $pl={11}><Tri />Properties</TabFace></TabOuter>
                  {tabs.map(([t, w, pl]) => <TabOuter key={t} $w={w}><TabFace $off $pl={pl}>{t}</TabFace></TabOuter>)}
                </TabStrip>
                <DetailFrame>
                  <DetailInner>
                    <DetailTools>
                      <ToolButton $w={29}><NewTodoIcon /></ToolButton>
                      <ToolButton $w={29} $off><ResolveIcon /></ToolButton>
                      <ToolButton $w={29} $off><SnoozeIcon /></ToolButton>
                    </DetailTools>
                    <div>
                      <TextPane>No ToDoItem selected</TextPane>
                      <Wizard>
                        <WizardButton>&lt; <u>B</u>ack</WizardButton>
                        <WizardButton $mr={45}><u>N</u>ext &gt;</WizardButton>
                        <WizardButton $mr={45}><u>F</u>inish</WizardButton>
                        <WizardButton><u>H</u>elp</WizardButton>
                      </Wizard>
                    </div>
                  </DetailInner>
                </DetailFrame>
              </RightPane>
            </Row>

            <StatusBar>
              <StatusField><Progress /></StatusField>
              <Memory>26M used of 494M max</Memory>
            </StatusBar>
          </Window>
          <RightEdge />
        </Stage>

        <Taskbar>
          <TaskItem $w={36}><WindowsLogo /></TaskItem>
          <TaskItem $w={36}><SearchIcon /></TaskItem>
          <TaskItem $w={36}><TaskView /></TaskItem>
          <TaskItem $ml={3}><Edge /><Running /></TaskItem>
          <TaskItem><FileExplorer /><Running $split /></TaskItem>
          <TaskItem><Chrome /></TaskItem>
          <TaskItem><Netflix /></TaskItem>
          <TaskItem><Chrome badge /><Running /></TaskItem>
          <TaskItem><GlassCube /><Running /></TaskItem>
          <TaskItem $w={36} $active><Bird /><Running $full /></TaskItem>
          <Tray>
            <TrayItem $w={22}><Icon w={12} h={8} smooth="1" stroke="#fff"><path d="M.5 7L6 1.500L11.500 7" strokeWidth="1.300" /></Icon></TrayItem>
            <TrayItem $w={26}><Icon smooth="1" stroke="#fff"><path d="M.5 5.500h2.500l3.500-3.500v12l-3.500-3.500h-2.500z" /><path d="M8.500 5.500q2 2.500 0 5M10.500 4q3.500 4 0 8" /><path d="M13 2.500q4 5.500 0 11" stroke="#777" /></Icon></TrayItem>
            <TrayItem $w={22}><Icon w={12} smooth="1" stroke="#fff"><rect x="2.500" y="0" width="7" height="12" rx="1.500" fill="#fff" stroke="none" /><path d="M.7 9v2.500l1.500 2h7.600l1.500-2V9M6 13v2.500M3 15.500h6" /></Icon></TrayItem>
            <TrayItem $w={27}><Icon stroke="#fff"><path d="M5.500 5.500h9v6h-9z" /><path d="M7 7h6v3H7zM15 7h1v3h-1z" fill="#fff" stroke="none" /><path d="M.5 3v3.500h4V3M1.500 1v2M3.500 1v2M2.500 7v3.500h3" /></Icon></TrayItem>
            <TrayItem $w={23}><Icon w={14} smooth="1" stroke="#fff"><path d="M.5 14A12.500 12.500 0 0 1 13 2.500M3.500 14.500A10 10 0 0 1 13 5.500M6 14.500A7.500 7.500 0 0 1 13 8.500" /><path d="M9 14.500a5 5 0 0 1 4-3.500v3.500z" fill="#fff" strokeWidth=".5" /></Icon></TrayItem>
            <TrayItem $w={36} $ls={-0.25}>ENG</TrayItem>
            <TrayItem $w={45} $ls={-0.5}>15:06</TrayItem>
            <TrayItem $w={16}><svg width="16" height="16" viewBox="0 0 16 16"><path d="M0 0h16v13h-5l-3 3l-3-3H0z" fill="#fff" /><path d="M3 3.500h10M3 6.500h10M3 9.500h7" stroke="#1e1e1e" /></svg></TrayItem>
          </Tray>
        </Taskbar>
      </Desktop>
    </>
  );
}
